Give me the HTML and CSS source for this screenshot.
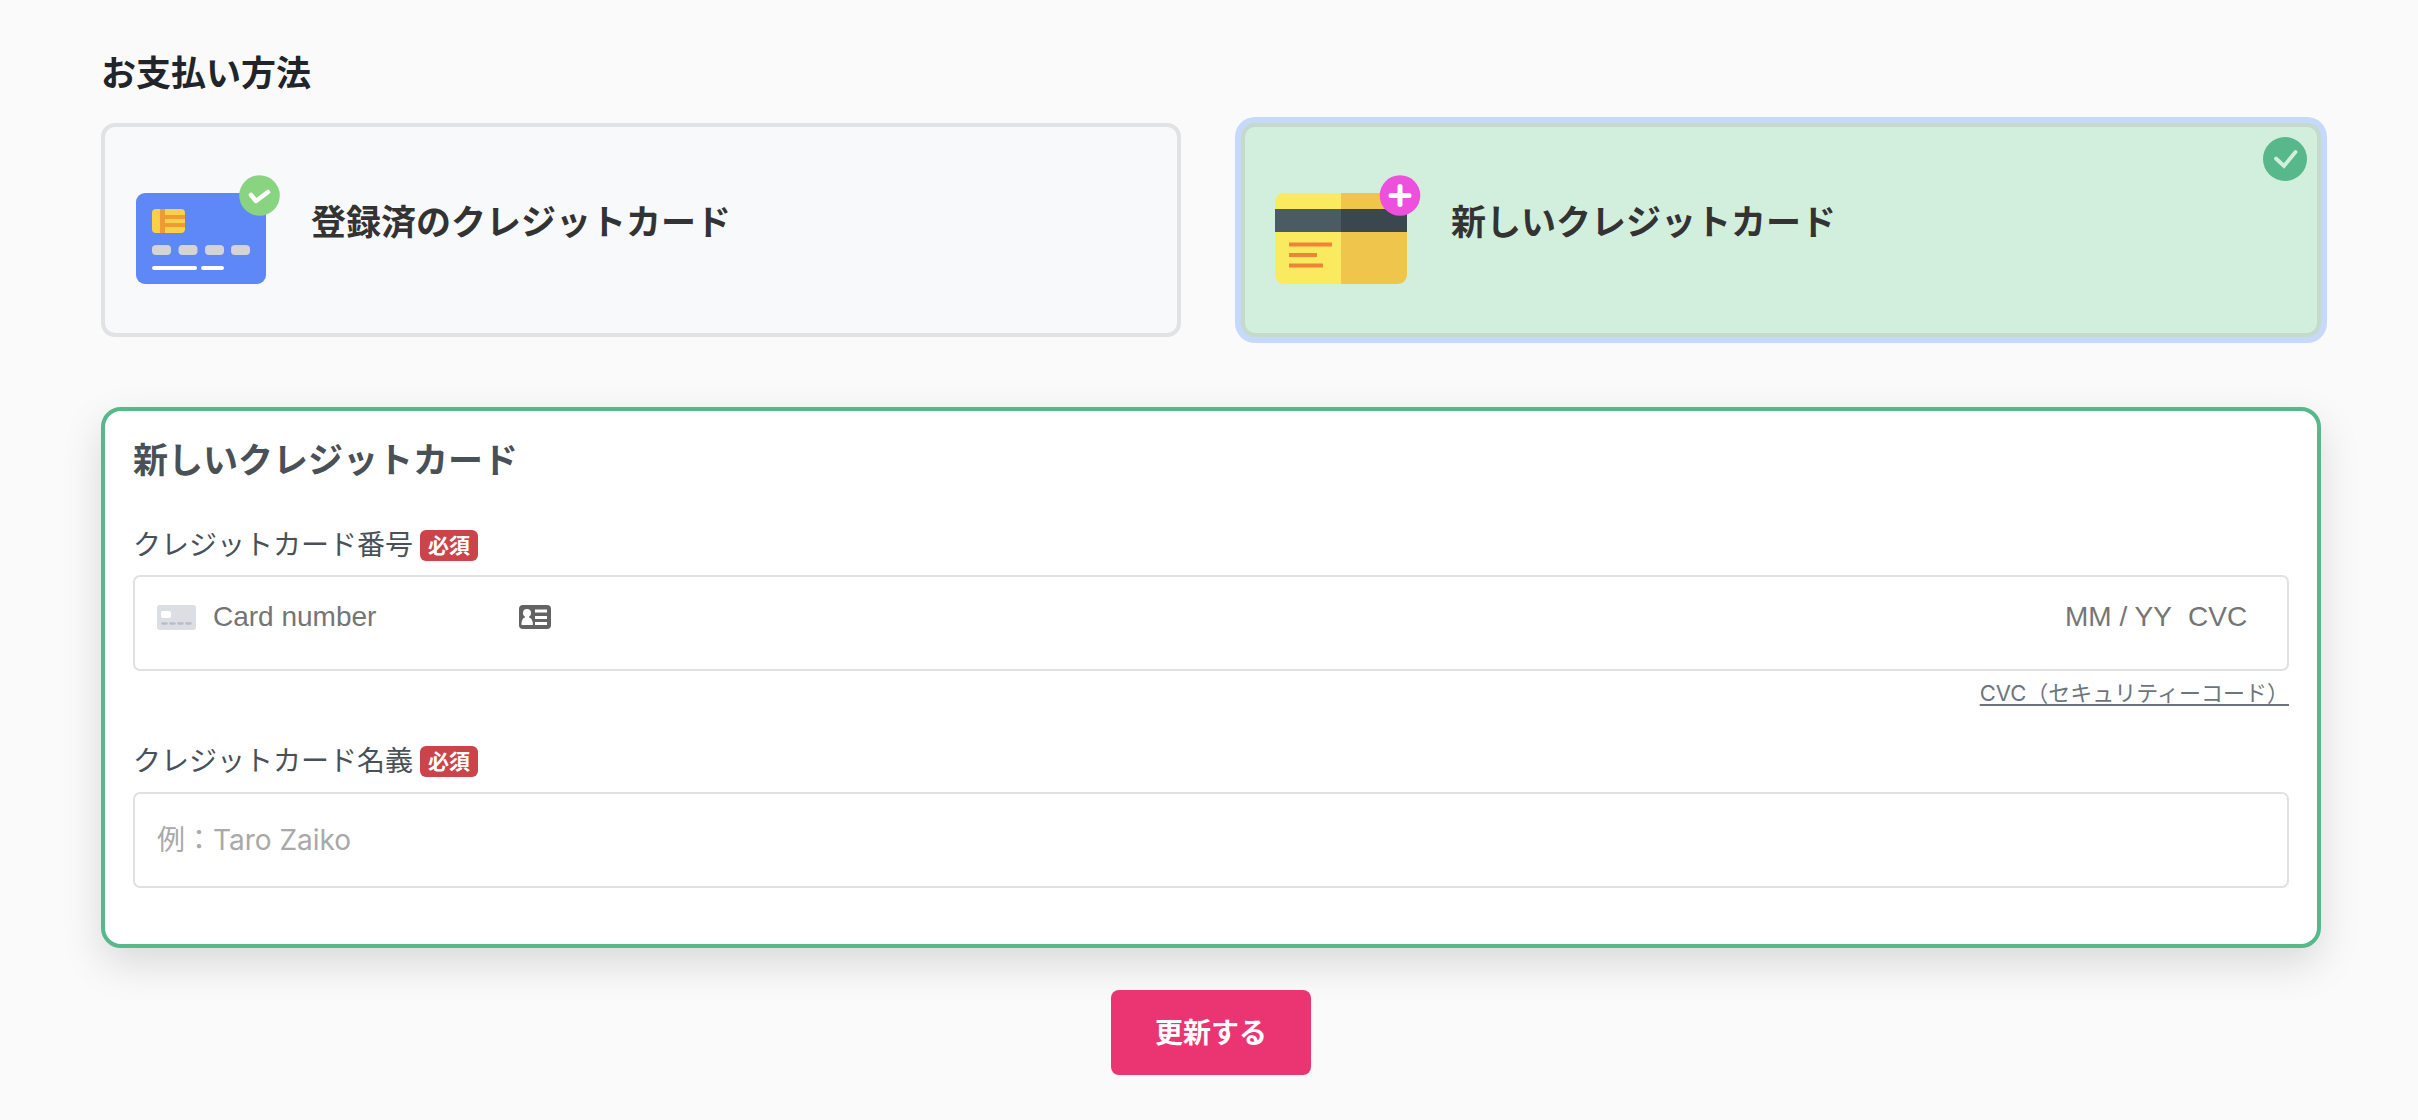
FILE: index.html
```html
<!DOCTYPE html>
<html lang="ja">
<head>
<meta charset="utf-8">
<meta name="viewport" content="width=device-width, initial-scale=1">
<title>お支払い方法</title>
<link rel="stylesheet" href="styles.css">
</head>
<body>
<main class="page">
  <h1 class="heading">お支払い方法</h1>
  <div class="methods">
    <button type="button" class="method" aria-pressed="false">
      <svg class="method-icon" viewBox="0 0 150 110" aria-hidden="true">
        <rect x="1" y="18" width="130" height="91" rx="9" fill="#5e87f7"/>
        <rect x="17" y="34" width="33" height="24" rx="4" fill="#f9d048"/>
        <path d="M25 34h5v6h20v4H30v4h20v4H30v6h-5z" fill="#f09a35"/>
        <g fill="#d4d4d4">
          <rect x="17" y="70" width="19" height="10" rx="4"/>
          <rect x="43.500" y="70" width="19" height="10" rx="4"/>
          <rect x="70" y="70" width="19" height="10" rx="4"/>
          <rect x="96" y="70" width="19" height="10" rx="4"/>
        </g>
        <path d="M19 93h41M68 93h19" stroke="#fff" stroke-width="4" stroke-linecap="round"/>
        <circle cx="124.500" cy="20.500" r="20.300" fill="#89d480"/>
        <path d="M116 20l5 6 12-9" fill="none" stroke="#fff" stroke-width="4.500" stroke-linecap="round" stroke-linejoin="round"/>
      </svg>
      <span class="method-name">登録済のクレジットカード</span>
    </button>
    <button type="button" class="method method-selected" aria-pressed="true">
      <svg class="method-icon" viewBox="0 0 150 110" aria-hidden="true">
        <path d="M66 18H9a9 9 0 0 0-9 9v73a9 9 0 0 0 9 9h57z" fill="#faea60"/>
        <path d="M66 18h57a9 9 0 0 1 9 9v73a9 9 0 0 1-9 9H66z" fill="#f0c54b"/>
        <path d="M0 34h66v23H0z" fill="#4b5b63"/>
        <path d="M66 34h66v23H66z" fill="#3b474f"/>
        <path d="M14 69.500h43M14 80h28M14 90.500h34" stroke="#f08335" stroke-width="4"/>
        <circle cx="125" cy="20.500" r="20.300" fill="#ed50dd"/>
        <path d="M116 20.500h18M125 11.500v18" stroke="#fff" stroke-width="5" stroke-linecap="round"/>
      </svg>
      <span class="method-name">新しいクレジットカード</span>
      <svg class="method-check" viewBox="0 0 44 44" aria-hidden="true">
        <circle cx="22" cy="22" r="22" fill="#56b88b"/>
        <path d="M13 21.500l8 7.500 11.500-14" fill="none" stroke="#d2efde" stroke-width="3.800" stroke-linecap="round"/>
      </svg>
    </button>
  </div>

  <form class="panel" id="card-form">
    <h2 class="panel-title">新しいクレジットカード</h2>
    <div class="label-row">
      <label for="card-number">クレジットカード番号</label>
      <span class="required">必須</span>
    </div>
    <div class="field card-field">
      <svg class="brand-icon" viewBox="0 0 39 25" aria-hidden="true">
        <rect width="39" height="25" rx="3" fill="#dddee4"/>
        <rect x="4" y="6" width="10" height="7" rx="2" fill="#fff"/>
        <path d="M5.500 18.500h4M13.500 18.500h4M21.500 18.500h4M29.500 18.500h4" stroke="#b9bcc9" stroke-width="2.600" stroke-linecap="round"/>
      </svg>
      <input class="card-input number-input" id="card-number" type="text" placeholder="Card number">
      <svg class="autofill-icon" viewBox="0 0 32 24" aria-hidden="true">
        <rect width="32" height="24" rx="4" fill="#636363"/>
        <circle cx="8" cy="8" r="4" fill="#fff"/>
        <path d="M6 10h4v2.500c2.500.500 4 3.500 4 7.500H2.500c0-4 1-7 3.500-7.500z" fill="#fff"/>
        <path d="M16 6h12M16 12.500h12M16 18.500h12" stroke="#fff" stroke-width="3"/>
      </svg>
      <input class="card-input expiry-input" type="text" placeholder="MM / YY" aria-label="有効期限">
      <input class="card-input cvc-input" type="text" placeholder="CVC" aria-label="CVC">
    </div>
    <div class="help-row"><a class="help-link" href="#cvc">CVC（セキュリティーコード）</a></div>
    <div class="label-row label-row-name">
      <label for="card-name">クレジットカード名義</label>
      <span class="required">必須</span>
    </div>
    <input class="field name-field" id="card-name" type="text" placeholder="例：Taro Zaiko">
  </form>

  <button class="submit" type="submit" form="card-form">更新する</button>
</main>
</body>
</html>
```
FILE: styles.css
```css
* {
  box-sizing: border-box;
}

body {
  margin: 0;
  background: #fafafa;
  color: #212529;
  font-family: Inter, "Noto Sans CJK JP", sans-serif;
}

button,
input {
  font-family: inherit;
}

.page {
  display: flex;
  flex-direction: column;
  padding: 52px 97px 44px 101px;
}

.heading,
.panel-title {
  margin: 0;
  font-size: 35px;
  font-weight: 700;
  line-height: 42px;
}

.methods {
  display: grid;
  grid-template-columns: 1fr 1fr;
  gap: 60px;
  margin-top: 29px;
}

.method {
  position: relative;
  display: flex;
  align-items: center;
  gap: 26px;
  min-height: 214px;
  padding: 0 30px;
  border: 4px solid #e0e2e3;
  border-radius: 14px;
  background: #f8f9fb;
  color: #333;
  text-align: left;
}

.method-selected {
  border-color: #c5dacd;
  background: #d2efde;
  box-shadow: 0 0 0 6px #c7d9fa;
}

.method-icon {
  flex: none;
  width: 150px;
  height: 110px;
}

.method-name {
  padding-bottom: 16px;
  font-size: 35px;
  font-weight: 700;
  line-height: 42px;
}

.method-check {
  position: absolute;
  top: 10px;
  right: 10px;
  width: 44px;
  height: 44px;
}

.panel {
  margin-top: 70px;
  padding: 28px 28px 56px;
  border: 4px solid #56b88b;
  border-radius: 20px;
  background: #fff;
  box-shadow: 0 16px 40px rgba(0, 0, 0, 0.13);
}

.panel-title {
  margin-bottom: 46px;
  color: #495057;
}

.label-row {
  display: flex;
  align-items: center;
  gap: 7px;
  margin-bottom: 12px;
  color: #495057;
  font-size: 28px;
  font-weight: 400;
  line-height: 36px;
}

.label-row-name {
  margin-top: 33px;
  margin-bottom: 13px;
}

.required {
  padding: 0 8px;
  border-radius: 6px;
  background: #cb444a;
  color: #fff;
  font-size: 21px;
  font-weight: 700;
  line-height: 31px;
}

.field {
  width: 100%;
  min-height: 96px;
  border: 2px solid #e1e1e1;
  border-radius: 7px;
  background: #fff;
}

.card-field {
  display: flex;
  align-items: center;
  padding: 0 29px 12px 22px;
}

.brand-icon {
  flex: none;
  width: 39px;
  height: 25px;
}

.card-input {
  height: 34px;
  padding: 0;
  border: 0;
  background: none;
  font-family: "Liberation Sans", Arial, sans-serif;
  font-size: 28px;
}

.card-input::placeholder {
  color: #757575;
  opacity: 1;
}

.number-input {
  width: 306px;
  margin-left: 17px;
}

.autofill-icon {
  flex: none;
  width: 32px;
  height: 24px;
  margin-right: auto;
}

.expiry-input {
  width: 123px;
}

.cvc-input {
  width: 70px;
}

.help-row {
  display: flex;
  justify-content: flex-end;
}

.help-link {
  margin-top: 5px;
  color: #6c757d;
  font-size: 22px;
  font-weight: 400;
  line-height: 34px;
  text-decoration: underline;
  text-decoration-thickness: 2px;
  text-decoration-skip-ink: none;
  text-underline-offset: 3px;
}

.name-field {
  display: block;
  padding: 0 22px;
  font-size: 28px;
  font-weight: 400;
}

.name-field::placeholder {
  color: #a9a9a9;
  opacity: 1;
}

.submit {
  align-self: center;
  min-width: 200px;
  min-height: 85px;
  margin-top: 42px;
  padding: 0 44px 4px;
  border: 0;
  border-radius: 8px;
  background: #eb3573;
  color: #fff;
  font-size: 28px;
  font-weight: 700;
}
```
